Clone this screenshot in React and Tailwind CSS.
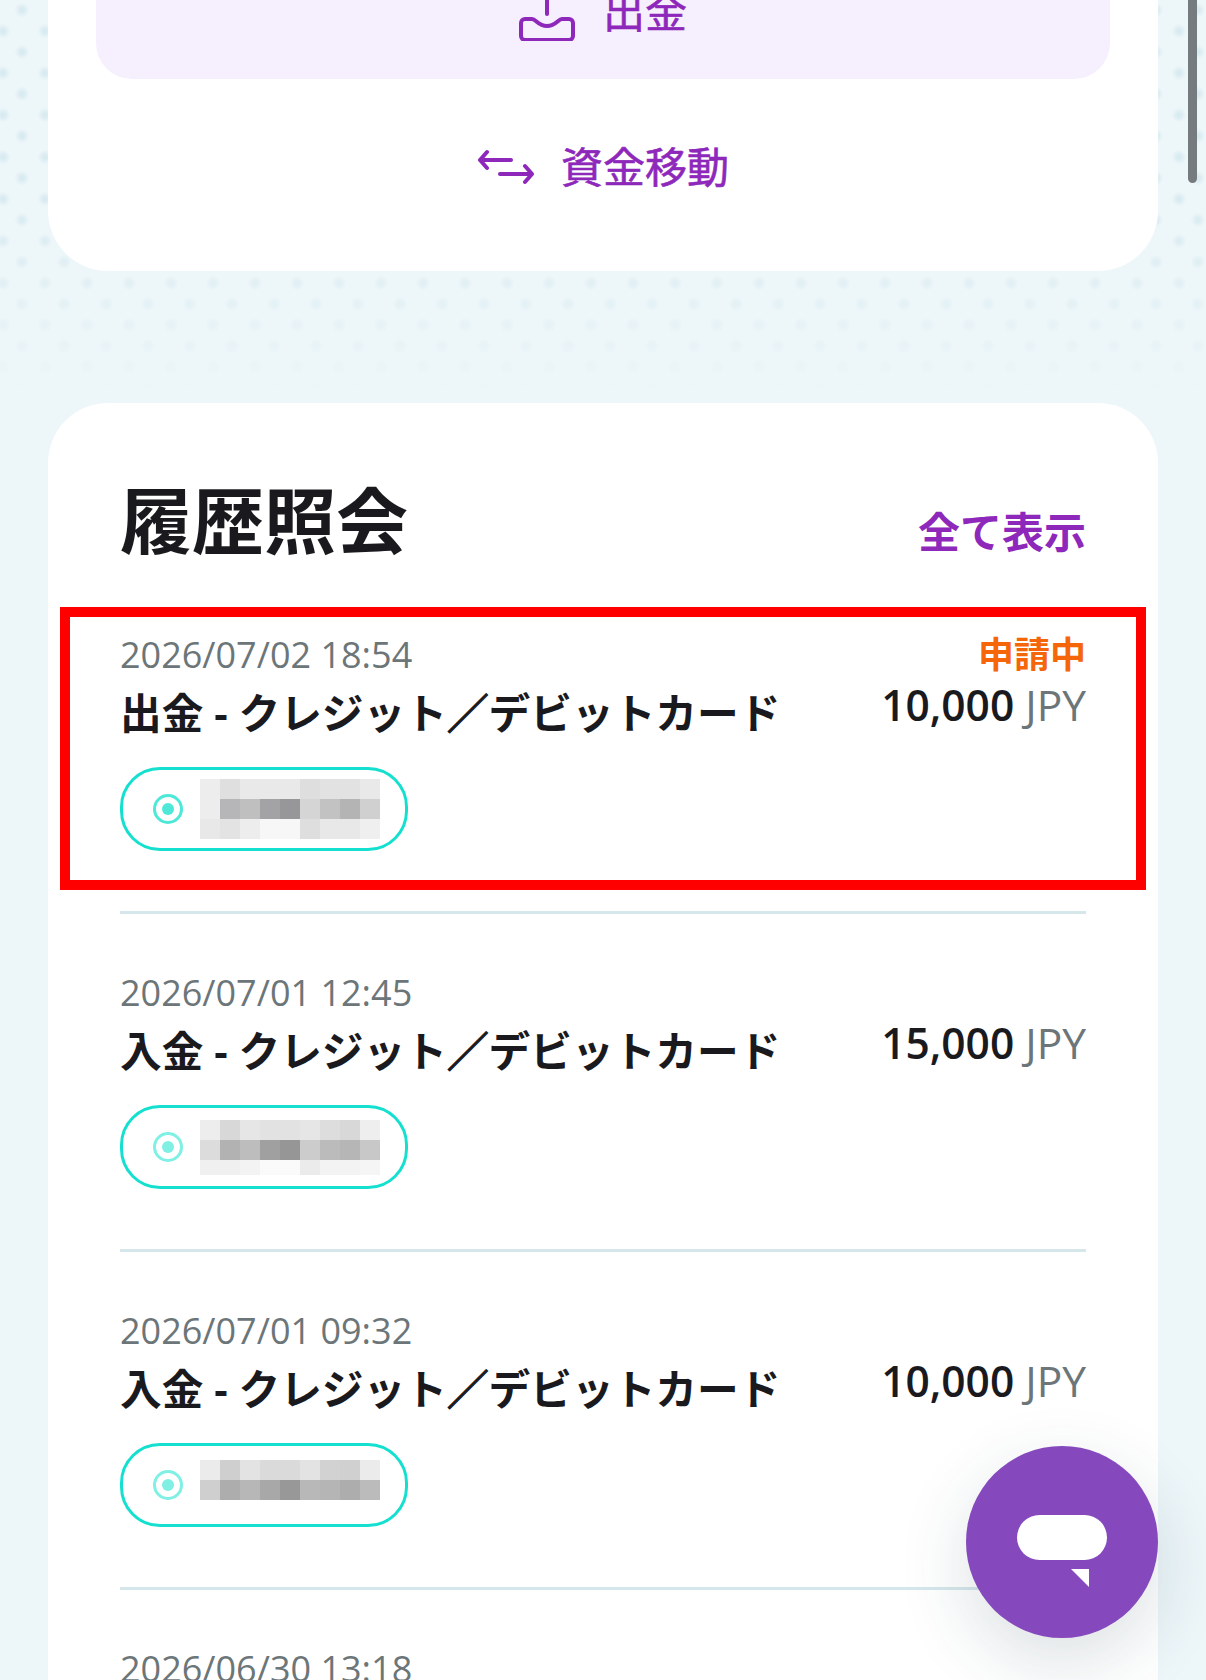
const font = { fontFamily: '"Open Sans","Noto Sans CJK JP",sans-serif' };

const items = [
  {
    date: '2026/07/02 18:54', kind: '出金', amount: '10,000', status: '申請中', marked: true, dot: '#4de8d8',
    rows: [
      [20, ['#ededed','#dfdfdf','#e9e9e9','#e9e9e9','#e9e9e9','#dedede','#e2e2e2','#e2e2e2','#e9e9e9']],
      [20, ['#ededed','#b6b6b8','#bfbfbf','#a3a3a5','#979799','#d5d5d5','#c2c2c2','#b4b4b4','#d0d0d0']],
      [20, ['#e8e8e8','#e3e3e3','#ededed','#f7f7f7','#f7f7f7','#dedede','#e8e8e8','#e8e8e8','#efefef']],
    ],
  },
  {
    date: '2026/07/01 12:45', kind: '入金', amount: '15,000', dot: '#7ff0e3',
    rows: [
      [20, ['#ededed','#d8d8d8','#e6e6e6','#e2e2e2','#e2e2e2','#e6e6e6','#dddddd','#d8d8d8','#eeeeee']],
      [20, ['#dcdcdc','#b2b2b2','#bdbdbd','#a0a0a0','#969696','#cccccc','#bbbbbb','#b6b6b6','#c8c8c8']],
      [15, ['#f0f0f0','#f0f0f0','#f3f3f3','#fafafa','#fafafa','#ebebeb','#f3f3f3','#f3f3f3','#f5f5f5']],
    ],
  },
  {
    date: '2026/07/01 09:32', kind: '入金', amount: '10,000', dot: '#7ff0e3',
    rows: [
      [20, ['#ebebeb','#cfcfcf','#e3e3e3','#dadada','#dadada','#e3e3e3','#d2d2d2','#d0d0d0','#ebebeb']],
      [20, ['#cfcfcf','#adadad','#b7b7b7','#a8a8a8','#989898','#b8b8b8','#b5b5b5','#adadad','#bbbbbb']],
      [10, Array(9).fill('transparent')],
    ],
  },
];

function Pixels({ rows }) {
  return (
    <div className="flex flex-col w-[180px]">
      {rows.map(([h, cells], i) => (
        <div key={i} className="flex" style={{ height: h }}>
          {cells.map((c, j) => (
            <div key={j} className="w-[20px]" style={{ background: c }} />
          ))}
        </div>
      ))}
    </div>
  );
}

function Item({ item }) {
  return (
    <div className="relative h-[338px] border-b-[3px] border-[#d6e7eb] pt-[59px] shrink-0">
      {item.marked && (
        <div className="absolute left-[-60px] right-[-60px] top-[31px] h-[283px] border-[10px] border-[#ff0000]" />
      )}
      <div className="flex justify-between">
        <div>
          <div className="text-[36px] leading-[40px] text-[#6c7679]">{item.date}</div>
          <div className="mt-[10px] text-[41.7px] leading-[56px] font-bold text-[#1a1a1e] whitespace-nowrap">
            {item.kind} - クレジット<span className="[-webkit-text-stroke:1.2px_#1a1a1e]">／</span>デビットカード
          </div>
          <div className="mt-[26px] flex items-center w-[288px] h-[84px] rounded-[40px] border-[3.5px] border-[#15e0cf] pl-[30px] gap-[17px]">
            <div className="flex items-center justify-center w-[30px] h-[30px] rounded-full border-[3px]" style={{ borderColor: item.dot }}>
              <div className="w-[12px] h-[12px] rounded-full" style={{ background: item.dot }} />
            </div>
            <Pixels rows={item.rows} />
          </div>
        </div>
        <div className="flex flex-col items-end">
          <div className="h-[40px] text-[36px] leading-[40px] font-bold text-[#f5650a]">{item.status}</div>
          <div className="mt-[2px] text-[42.5px] leading-[56px] whitespace-nowrap text-[#6c7679]">
            <span className="font-semibold text-[#1a1a1e]">{item.amount}</span> JPY
          </div>
        </div>
      </div>
    </div>
  );
}

export default function App() {
  return (
    <div className="relative w-[1206px] h-[1680px] overflow-hidden bg-[#edf6f9]" style={font}>
      <div className="absolute left-0 top-0 w-full h-[410px] bg-[radial-gradient(circle,#d8ebf1_2px,transparent_7px),radial-gradient(circle,#d8ebf1_2px,transparent_7px)] bg-[length:42px_42px] bg-[position:-18px_10px,1px_-11px] [mask-image:linear-gradient(to_bottom,black_48%,transparent_95%)]" />

      <div className="relative flex flex-col px-[48px]">
        <section className="mt-[-100px] h-[371px] rounded-b-[60px] bg-white px-[48px] shrink-0">
          <div className="flex items-end justify-center gap-[28px] h-[179px] pb-[46px] rounded-[36px] bg-[#f6effd] text-[#8e28bb]">
            <svg className="w-[56px] h-[60px] mb-[-8px]" viewBox="0 0 56 60" fill="none" stroke="#8e28bb" strokeWidth="4" strokeLinecap="round" strokeLinejoin="round">
              <path d="M28 0V33" />
              <path d="M13 38H6a4 4 0 0 0-4 4v13a4 4 0 0 0 4 4h44a4 4 0 0 0 4-4V42a4 4 0 0 0-4-4h-7c-4 0-6 7-15 7s-11-7-15-7Z" />
            </svg>
            <span className="text-[42px] leading-[42px] [-webkit-text-stroke:0.6px_#8e28bb]">出金</span>
          </div>
          <div className="mt-[64px] pl-[1px] flex items-center justify-center gap-[27px] text-[#8e28bb]">
            <svg className="w-[56px] h-[36px]" viewBox="0 0 56 36" fill="none" stroke="#8e28bb" strokeWidth="4" strokeLinecap="round" strokeLinejoin="round">
              <path d="M33 11H2M9 3 2 11l7 8" />
              <path d="M22 25h32M47 17l7 8-7 8" />
            </svg>
            <span className="text-[42px] leading-[48px] [-webkit-text-stroke:0.6px_#8e28bb]">資金移動</span>
          </div>
        </section>

        <section className="mt-[132px] rounded-t-[60px] bg-white px-[72px] h-[1400px] shrink-0">
          <div className="flex items-end justify-between h-[173px] pb-[19px]">
            <h1 className="mb-[-8px] text-[72px] leading-[90px] font-bold text-[#1a1a1e]">履歴照会</h1>
            <a className="text-[42px] leading-[50px] font-bold text-[#8e28bb]">全て表示</a>
          </div>
          {items.map((it, i) => <Item key={i} item={it} />)}
          <div className="pt-[59px] text-[36px] leading-[40px] text-[#6c7679]">2026/06/30 13:18</div>
        </section>
      </div>

      <div className="absolute left-[1188px] top-0 w-[9px] h-[183px] rounded-b-[5px] bg-[#757b7e]" />

      <div className="absolute left-[966px] top-[1446px] w-[192px] h-[192px] rounded-full bg-[#8549bd] shadow-[0_24px_70px_rgba(40,70,80,0.16)]">
        <svg className="absolute left-0 top-0 w-[192px] h-[192px]" viewBox="0 0 192 192" fill="#fff">
          <rect x="51" y="69" width="90" height="45" rx="22.5" />
          <path d="M105 123h18v18Z" />
        </svg>
      </div>
    </div>
  );
}
